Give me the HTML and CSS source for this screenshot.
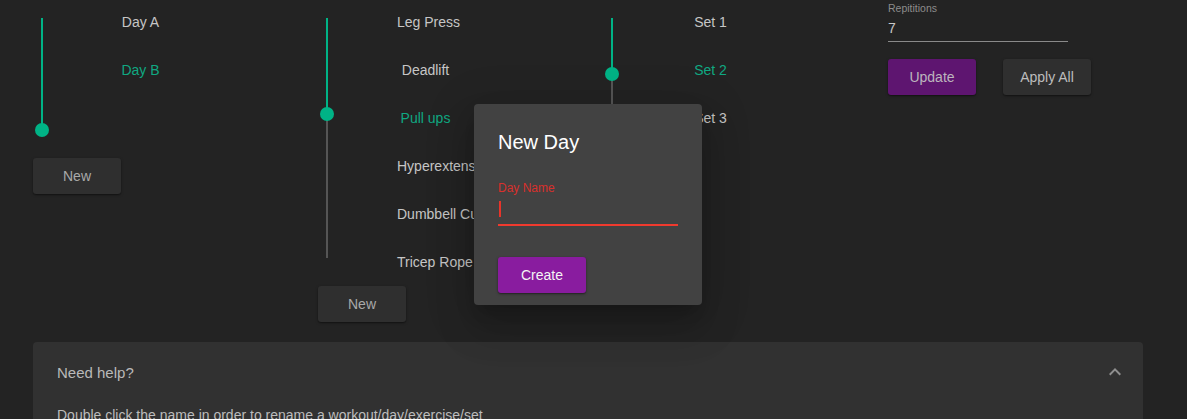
FILE: index.html
```html
<!DOCTYPE html>
<html lang="en">
<head>
<meta charset="utf-8">
<title>Workout editor</title>
<link rel="stylesheet" href="styles.css">
</head>
<body>
<main class="page">
  <section class="columns">
    <div class="col">
      <div class="col-row">
        <div class="slider">
          <div class="track track-days">
            <div class="seg-on" style="height:100%"></div>
            <div class="seg-off"></div>
            <span class="thumb" style="top:100%"></span>
          </div>
        </div>
        <ul class="labels">
          <li class="item">Day A</li>
          <li class="item active">Day B</li>
        </ul>
      </div>
      <button class="btn btn-dark">New</button>
    </div>

    <div class="col">
      <div class="col-row">
        <div class="slider">
          <div class="track track-exercises">
            <div class="seg-on" style="height:40%"></div>
            <div class="seg-off"></div>
            <span class="thumb" style="top:40%"></span>
          </div>
        </div>
        <ul class="labels">
          <li class="item">Leg Press</li>
          <li class="item">Deadlift</li>
          <li class="item active">Pull ups</li>
          <li class="item">Hyperextensions</li>
          <li class="item">Dumbbell Curls</li>
          <li class="item">Tricep Rope</li>
        </ul>
      </div>
      <button class="btn btn-dark">New</button>
    </div>

    <div class="col">
      <div class="col-row">
        <div class="slider">
          <div class="track track-sets">
            <div class="seg-on" style="height:50%"></div>
            <div class="seg-off"></div>
            <span class="thumb" style="top:50%"></span>
          </div>
        </div>
        <ul class="labels">
          <li class="item">Set 1</li>
          <li class="item active">Set 2</li>
          <li class="item">Set 3</li>
        </ul>
      </div>
      <button class="btn btn-dark">New</button>
    </div>

    <div class="col col-edit">
      <label class="field">
        <span class="field-label">Repititions</span>
        <span class="field-input">7</span>
      </label>
      <div class="actions">
        <button class="btn btn-purple-dim">Update</button>
        <button class="btn btn-dark btn-apply">Apply All</button>
      </div>
    </div>
  </section>

  <section class="help">
    <div class="help-summary">
      <span class="help-title">Need help?</span>
      <svg class="chevron" viewBox="0 0 24 24" width="24" height="24" aria-hidden="true">
        <path d="M12 8l-6 6 1.41 1.41L12 10.83l4.59 4.58L18 14z"/>
      </svg>
    </div>
    <div class="help-details">
      Double click the name in order to rename a workout/day/exercise/set
    </div>
  </section>
</main>

<div class="dialog" role="dialog" aria-labelledby="dlg-title">
  <h2 class="dialog-title" id="dlg-title">New Day</h2>
  <div class="dialog-field">
    <span class="dialog-label">Day Name</span>
    <div class="dialog-input"><span class="caret"></span></div>
  </div>
  <button class="btn btn-purple">Create</button>
</div>
</body>
</html>
```

FILE: styles.css
```css
* { box-sizing: border-box; }

html, body {
  margin: 0;
  padding: 0;
  height: 419px;
  overflow: hidden;
  background: #232323;
  font-family: "Liberation Sans", Arial, sans-serif;
  color: #c6c6c6;
}

.page {
  padding-left: 33px;
}

.columns {
  display: grid;
  grid-template-columns: 285px 285px 285px auto;
  align-items: start;
}

.col {
  display: flex;
  flex-direction: column;
  align-items: flex-start;
}

.col-row {
  display: flex;
  align-items: flex-start;
}

.slider {
  width: 18px;
  padding: 18px 0 28px;
  display: flex;
  justify-content: center;
}

.track {
  position: relative;
  width: 2px;
  display: flex;
  flex-direction: column;
}

.track-days { height: 112px; }
.track-exercises { height: 240px; }
.track-sets { height: 111px; }

.seg-on { background: #00b386; flex: none; }
.seg-off { background: #555555; flex: 1; }

.thumb {
  position: absolute;
  left: 50%;
  width: 14px;
  height: 14px;
  margin: -7px 0 0 -7px;
  border-radius: 50%;
  background: #00b386;
}

.labels {
  list-style: none;
  margin: 0 0 0 61px;
  padding: 0;
  width: 57px;
  display: flex;
  flex-direction: column;
  gap: 4px;
}

.item {
  height: 44px;
  line-height: 44px;
  font-size: 14px;
  text-align: center;
  white-space: nowrap;
  color: #c6c6c6;
}

.item.active { color: #10a882; }

.btn {
  width: 88px;
  height: 36px;
  border: 0;
  border-radius: 3px;
  font-family: inherit;
  font-size: 14px;
  padding: 0;
  cursor: pointer;
  box-shadow: 0 1px 3px rgba(0,0,0,0.35), 0 1px 1px rgba(0,0,0,0.2);
}

.btn-dark { background: #2f2f2f; color: #a9a9a9; }
.btn-apply { color: #bdbdbd; }
.btn-purple { background: #891c9f; color: #f4f4f4; }
.btn-purple-dim { background: #5e1570; color: #bcb6be; }

/* edit column */
.field {
  display: flex;
  flex-direction: column;
  width: 180px;
  border-bottom: 1px solid #8a8a8a;
}

.field-label {
  font-size: 10.5px;
  line-height: 16px;
  color: #8c8c8c;
}

.field-input {
  font-size: 14px;
  line-height: 20px;
  padding: 2px 0 3px;
  color: #c8c8c8;
}

.actions {
  margin-top: 17px;
  display: flex;
  gap: 27px;
}

/* help panel */
.help {
  margin-top: 20px;
  width: 1110px;
  background: #313131;
  border-radius: 4px 4px 0 0;
}

.help-summary {
  display: flex;
  align-items: center;
  justify-content: space-between;
  height: 24px;
  box-sizing: content-box;
  padding: 19px 16px 0 24px;
}

.help-title {
  font-size: 15px;
  line-height: 22px;
  color: #b9b9b9;
}

.chevron {
  fill: #8f8f8f;
  margin-top: -3px;
}

.help-details {
  padding: 20px 24px 24px;
  font-size: 14px;
  line-height: 20px;
  color: #bcbcbc;
}

/* dialog */
.dialog {
  position: absolute;
  left: 474px;
  top: 104px;
  width: 228px;
  height: 201px;
  padding: 22px 24px 12px;
  background: #424242;
  border-radius: 4px;
  box-shadow: 0 11px 15px -7px rgba(0,0,0,0.2), 0 24px 38px 3px rgba(0,0,0,0.14), 0 9px 46px 8px rgba(0,0,0,0.12);
}

.dialog-title {
  margin: 0;
  font-size: 20px;
  line-height: 32px;
  font-weight: normal;
  color: #ffffff;
}

.dialog-field {
  margin-top: 22px;
  width: 180px;
}

.dialog-label {
  display: block;
  font-size: 12px;
  line-height: 16px;
  color: #d8302c;
}

.dialog-input {
  height: 30px;
  padding-top: 5px;
  border-bottom: 2px solid #f03a2e;
}

.caret {
  display: block;
  width: 2px;
  height: 16px;
  margin-left: 1px;
  background: #e8342a;
}

.dialog .btn-purple {
  margin-top: 31px;
}
```
